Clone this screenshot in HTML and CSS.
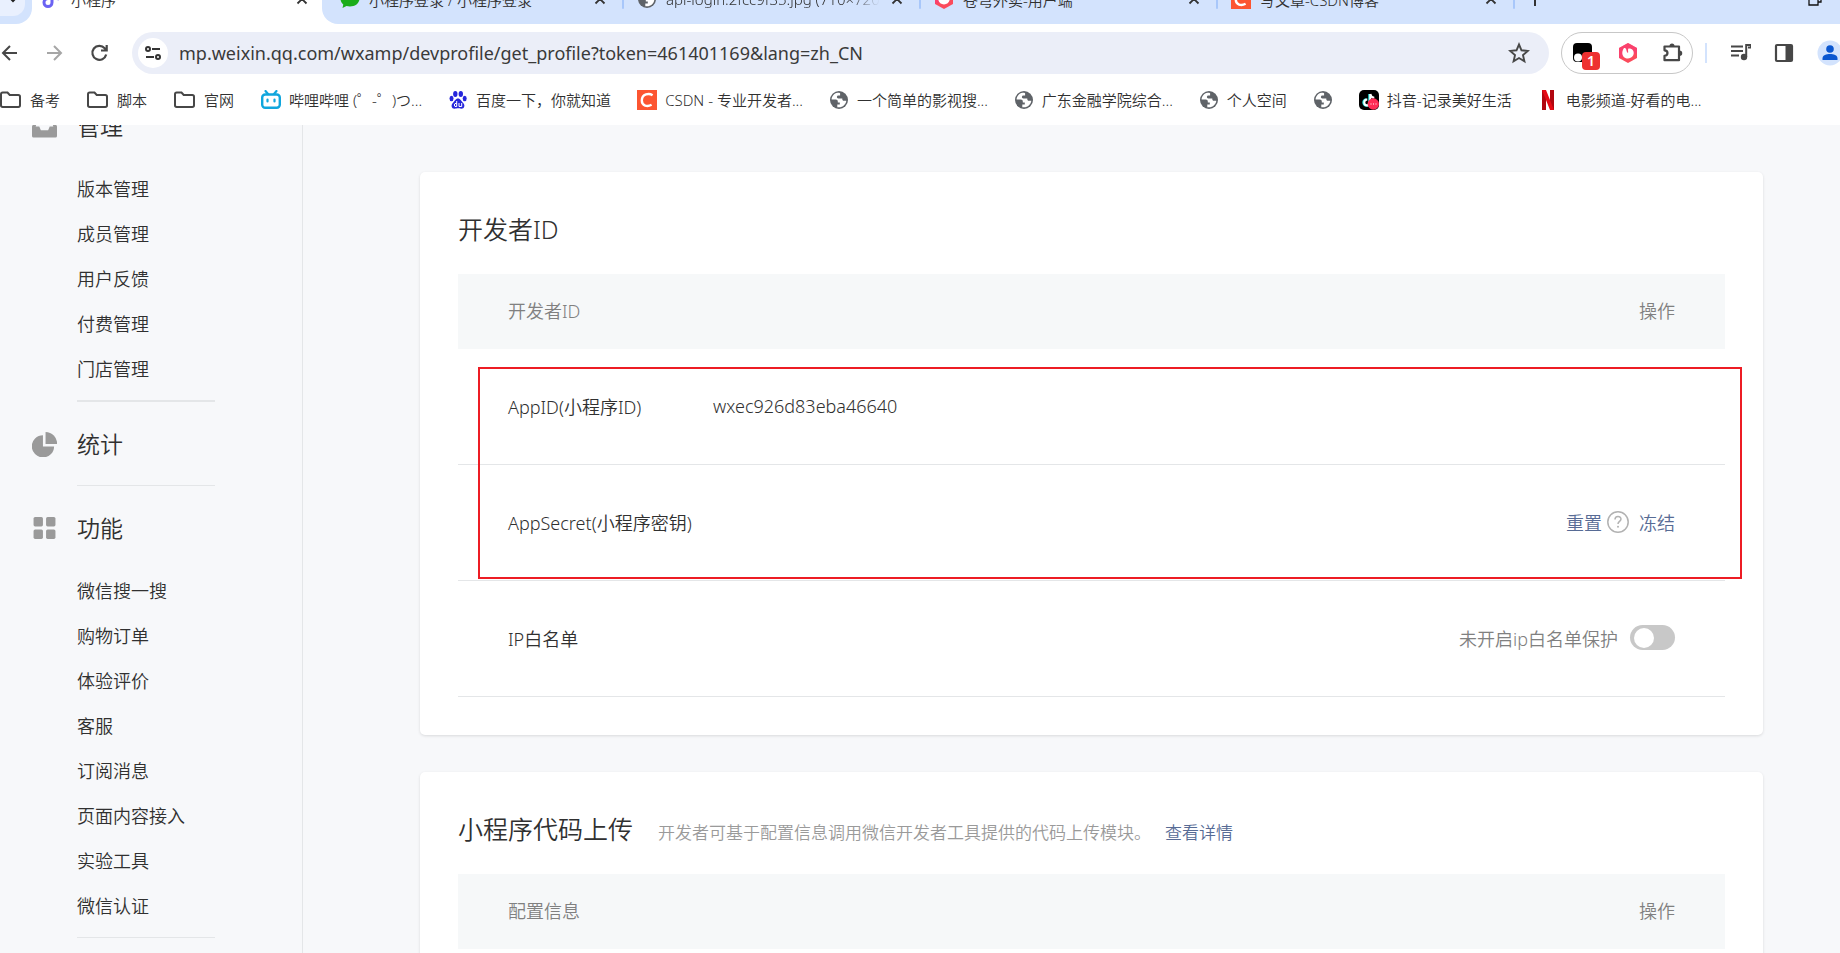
FILE: index.html
```html
<!DOCTYPE html>
<html lang="zh-CN">
<head>
<meta charset="utf-8">
<title>小程序</title>
<link rel="stylesheet" href="styles.css">
</head>
<body>
<svg class="defs" aria-hidden="true">
  <symbol id="i-close" viewBox="0 0 16 16"><path d="M3.500 3.500l9 9M12.500 3.500l-9 9" fill="none" stroke="#333" stroke-width="1.800"/></symbol>
  <symbol id="i-globe" viewBox="0 0 20 20"><circle cx="10" cy="10" r="9" fill="#5f6368"/><path d="M8.500 2.800C5 3.400 2.600 6.400 2.600 9.600h4.200c1.300 0 2 .8 2 1.900v1h2v2H8.300v2.700c5 .9 8.600-2.500 9-6.400h-2.500c-1 0-1.500-.7-1.500-1.500V8.400H9.400c-1 0-1.500-.6-1.500-1.400 0-.9.600-1.500 1.500-1.500h1.700V3.200c-.8-.4-1.700-.5-2.600-.4z" fill="#fff"/></symbol>
  <symbol id="i-folder" viewBox="0 0 22 20"><path d="M1 4.200q0-1.700 1.700-1.700h4.800l2.200 2.500h8.600q1.700 0 1.700 1.700v8.600q0 1.700-1.700 1.700H2.700Q1 17 1 15.300z" fill="none" stroke="#474747" stroke-width="2"/></symbol>
  <symbol id="i-csdn" viewBox="0 0 20 20"><path d="M0 0h20v20H0z" fill="#fc5531"/><path d="M15.600 5.200C12 3 5 3.700 4.800 10.600c0 5.400 5.500 6.400 9.800 4.200" fill="none" stroke="#fff" stroke-width="2.400"/></symbol>
  <symbol id="i-hex" viewBox="0 0 20 20"><path d="M10 0l9 5v10l-9 5-9-5V5z" fill="#fb4b5c"/><path d="M10 0l9 5v5L1 15V5z" fill="#fa3a78" opacity=".6"/><path d="M5.800 5.200c1.300-.4 2 .3 2.400 1.300.4 1 .3 2.500 1.800 3.600.6-1.300-.6-2.700.4-4.600 3.500-.4 5.600 2 5.300 5-.3 2.800-2.700 4.900-5.700 4.900s-5.500-2-5.700-5c-.1-2 .5-3.700 1.500-5.200z" fill="#fff"/></symbol>
</svg>

<header class="browser">
  <div class="strip">
    <div class="strip-left"><button class="tab-search" aria-label="搜索标签页"><svg width="14" height="14" viewBox="0 0 14 14"><path d="M2 4l5 5 5-5" fill="none" stroke="#222" stroke-width="2"/></svg></button></div>
    <div class="tab tab-active">
      <svg class="ico" viewBox="0 0 20 20"><path d="M10 3v10.500a4 4 0 1 1-4-4" fill="none" stroke="#6b63f3" stroke-width="3"/><path d="M10 3c1 4 3 6.500 7 7" fill="none" stroke="#8f86f7" stroke-width="3"/></svg>
      <span class="tab-title">小程序</span>
      <button class="close" aria-label="关闭"><svg width="16" height="16"><use href="#i-close"/></svg></button>
    </div>
    <div class="strip-rest">
      <div class="tab">
        <svg class="ico" viewBox="0 0 20 20"><path d="M10 1.500c5.500 0 9.500 3.500 9.500 8s-4 8-9.500 8c-1.300 0-2.500-.2-3.500-.5l-4 2 .8-3.500C1.500 14 .5 12 .5 9.500c0-4.500 4-8 9.500-8z" fill="#1aad19"/></svg>
        <span class="tab-title">小程序登录 / 小程序登录</span>
        <button class="close" aria-label="关闭"><svg width="16" height="16"><use href="#i-close"/></svg></button>
      </div>
      <div class="tab">
        <svg class="ico"><use href="#i-globe"/></svg>
        <span class="tab-title fade">api-login.2fcc9f35.jpg (710×720)</span>
        <button class="close" aria-label="关闭"><svg width="16" height="16"><use href="#i-close"/></svg></button>
      </div>
      <div class="tab">
        <svg class="ico"><use href="#i-hex"/></svg>
        <span class="tab-title">苍穹外卖-用户端</span>
        <button class="close" aria-label="关闭"><svg width="16" height="16"><use href="#i-close"/></svg></button>
      </div>
      <div class="tab">
        <svg class="ico"><use href="#i-csdn"/></svg>
        <span class="tab-title">写文章-CSDN博客</span>
        <button class="close" aria-label="关闭"><svg width="16" height="16"><use href="#i-close"/></svg></button>
      </div>
      <button class="new-tab" aria-label="新标签页"><svg width="16" height="16" viewBox="0 0 16 16"><path d="M8 1v14M1 8h14" stroke="#333" stroke-width="2"/></svg></button>
      <button class="restore" aria-label="还原"><svg width="14" height="14" viewBox="0 0 14 14"><path d="M1 4h9v9H1zM4 4V1h9v9h-3" fill="none" stroke="#111" stroke-width="1.300"/></svg></button>
    </div>
  </div>

  <div class="toolbar">
    <div class="nav">
      <button aria-label="后退"><svg width="20" height="20" viewBox="0 0 20 20"><path d="M17 10H3.500M10 3l-7 7 7 7" fill="none" stroke="#474747" stroke-width="2"/></svg></button>
      <button aria-label="前进"><svg width="20" height="20" viewBox="0 0 20 20"><path d="M2 10h13.500M9 3l7 7-7 7" fill="none" stroke="#a6a6a6" stroke-width="2"/></svg></button>
      <button aria-label="重新加载"><svg width="20" height="20" viewBox="0 0 20 20"><path d="M16.200 11.500a7 7 0 1 1-1.500-6.300L16.500 7M16.700 2v5.500H11" fill="none" stroke="#474747" stroke-width="2.200"/></svg></button>
    </div>
    <div class="omnibox">
      <button class="site" aria-label="网站信息"><svg width="18" height="18" viewBox="0 0 18 18"><g fill="none" stroke="#333" stroke-width="2"><circle cx="4" cy="5" r="2"/><path d="M8 5h8M2 13h8"/><circle cx="14" cy="13" r="2"/></g></svg></button>
      <input class="url" type="text" aria-label="地址栏" value="mp.weixin.qq.com/wxamp/devprofile/get_profile?token=461401169&amp;lang=zh_CN">
      <button aria-label="收藏"><svg width="22" height="22" viewBox="0 0 22 22"><path d="M11 2.500l2.500 5.800 6.300.6-4.800 4.200 1.400 6.200L11 16l-5.400 3.300L7 13.100 2.200 8.900l6.300-.6z" fill="none" stroke="#474747" stroke-width="1.900"/></svg></button>
    </div>
    <div class="exts">
      <button class="ext" aria-label="脚本扩展"><svg width="20" height="20" viewBox="0 0 20 20"><rect width="19" height="19" y="0" rx="4"/><circle cx="5" cy="14.500" r="4" fill="#fff"/><circle cx="14" cy="14.500" r="4" fill="#fff"/></svg><span class="count">1</span></button>
      <button class="ext" aria-label="扩展"><svg width="20" height="20"><use href="#i-hex"/></svg></button>
      <button class="ext" aria-label="扩展程序"><svg width="22" height="22" viewBox="0 0 22 22"><path d="M2.500 4.500H17v13.700H2.500v-4.400c4-.3 4-5.200 0-5.500z" fill="none" stroke="#474747" stroke-width="2.200" stroke-linejoin="round"/><path d="M7.500 4a2.500 2.500 0 0 1 5 0zM17.500 8.500a2.500 2.500 0 0 1 0 5.500z" fill="#474747"/></svg></button>
    </div>
    <div class="tools">
      <button aria-label="媒体"><svg width="20" height="20" viewBox="0 0 20 20"><path d="M0 3.500h12M0 8h12M0 12.500h8" stroke="#474747" stroke-width="2.200"/><circle cx="13" cy="14" r="3.200" fill="#474747"/><path d="M15.200 14V2H20v2.500h-3" fill="none" stroke="#474747" stroke-width="2"/></svg></button>
      <button aria-label="侧边栏"><svg width="20" height="20" viewBox="0 0 20 20"><rect x="2" y="2" width="16" height="16" rx="1" fill="none" stroke="#474747" stroke-width="2.200"/><path d="M11.500 2H18v16h-6.500z" fill="#474747"/></svg></button>
      <button aria-label="用户"><svg width="26" height="26" viewBox="0 0 26 26"><circle cx="13" cy="13" r="12.500" fill="#d3e3fd"/><circle cx="13" cy="9" r="3.800" fill="#0b57d0"/><path d="M5.500 20v-1.500c0-3.500 4-4.500 7.500-4.500s7.500 1 7.500 4.500V20z" fill="#0b57d0"/></svg></button>
    </div>
  </div>

  <nav class="bookmarks" aria-label="书签">
    <a class="folder" href="#"><svg class="fold"><use href="#i-folder"/></svg>备考</a>
    <a class="folder" href="#"><svg class="fold"><use href="#i-folder"/></svg>脚本</a>
    <a class="folder" href="#"><svg class="fold"><use href="#i-folder"/></svg>官网</a>
    <a href="#"><svg class="ico" viewBox="0 0 20 20"><rect x="1.200" y="4.500" width="17.600" height="13.300" rx="3" fill="none" stroke="#10a6dd" stroke-width="2.400"/><path d="M4.500 1l2.500 3M15.500 1L13 4M6.500 9.500v2M13.500 9.500v2" stroke="#10a6dd" stroke-width="2.200" stroke-linecap="round"/></svg>哔哩哔哩 (゜-゜)つ...</a>
    <a href="#"><svg class="ico" viewBox="0 0 20 20"><g fill="#2626dc"><ellipse cx="7.300" cy="4" rx="2.200" ry="3"/><ellipse cx="12.800" cy="4" rx="2.200" ry="3"/><ellipse cx="3.500" cy="8.500" rx="2" ry="2.700"/><ellipse cx="16.700" cy="8.500" rx="2" ry="2.700"/><path d="M10 8.500c2.500 0 3 2.500 5 4.200 2.500 2.300 1.500 6-1.700 6-1.500 0-2-.4-3.300-.4s-2 .4-3.500.4c-3 0-4-3.700-1.500-6 2-1.700 2.500-4.200 5-4.200z"/></g><path d="M8.700 11v5.500H7q-1.500-1.500 0-3h1.700M11 13v3.500h2.700V13" fill="none" stroke="#fff"/></svg>百度一下，你就知道</a>
    <a href="#"><svg class="ico"><use href="#i-csdn"/></svg>CSDN - 专业开发者...</a>
    <a href="#"><svg class="ico"><use href="#i-globe"/></svg>一个简单的影视搜...</a>
    <a href="#"><svg class="ico"><use href="#i-globe"/></svg>广东金融学院综合...</a>
    <a href="#"><svg class="ico"><use href="#i-globe"/></svg>个人空间</a>
    <a href="#" aria-label="网页"><svg class="ico"><use href="#i-globe"/></svg></a>
    <a href="#"><svg class="ico" viewBox="0 0 20 20"><rect width="20" height="20" rx="5"/><path d="M10.500 4v8.500a3 3 0 1 1-3-3" fill="none" stroke="#25f4ee" stroke-width="2.400"/><path d="M11.300 4v8.500a3 3 0 1 1-3-3M11.300 4c.5 2.500 2 3.600 4 3.800" fill="none" stroke="#fff" stroke-width="2"/><circle cx="14.300" cy="14" r="5.700" fill="#fe2c55"/><path d="M11.500 14h1M14 14h1M16.500 14h1" stroke="#fff" stroke-width="1.200"/></svg>抖音-记录美好生活</a>
    <a href="#"><svg class="ico" viewBox="0 0 20 20"><path d="M4 0h4v20H4zM12 0h4v20h-4z" fill="#b1060f"/><path d="M4 0h4l8 20h-4z" fill="#e50914"/></svg>电影频道-好看的电...</a>
  </nav>
</header>

<div class="page">
  <aside class="sidebar">
    <nav class="menu">
      <section class="group group-first">
        <h2><svg class="mi" viewBox="0 0 24 24"><path d="M4.500 2h15L24 12v9q0 1.500-1.500 1.500h-21Q0 22.500 0 21v-9zM6 4.500L3.500 12H7l1.500 3.500h7L17 12h3.500L18 4.500z" fill="#9a9a9a" fill-rule="evenodd"/></svg>管理</h2>
        <ul><li><a href="#">版本管理</a></li><li><a href="#">成员管理</a></li><li><a href="#">用户反馈</a></li><li><a href="#">付费管理</a></li><li><a href="#">门店管理</a></li></ul>
      </section>
      <section class="group">
        <h2><svg class="mi" viewBox="0 0 24 24"><path d="M10.500 3v10.800h10.700A10.700 10.700 0 1 1 10.500 3z" fill="#9a9a9a"/><path d="M13 0a11.500 11.500 0 0 1 11.200 11.500H13z" fill="#9a9a9a"/></svg>统计</h2>
      </section>
      <section class="group">
        <h2><svg class="mi" viewBox="0 0 24 24"><g fill="#9a9a9a"><rect x="1.500" y="1" width="9" height="9" rx="1.500"/><rect x="13.500" y="1" width="9" height="9" rx="1.500"/><rect x="1.500" y="13" width="9" height="9" rx="1.500"/><rect x="13.500" y="13" width="9" height="9" rx="1.500"/></g></svg>功能</h2>
        <ul><li><a href="#">微信搜一搜</a></li><li><a href="#">购物订单</a></li><li><a href="#">体验评价</a></li><li><a href="#">客服</a></li><li><a href="#">订阅消息</a></li><li><a href="#">页面内容接入</a></li><li><a href="#">实验工具</a></li><li><a href="#">微信认证</a></li></ul>
      </section>
    </nav>
  </aside>

  <main class="main">
    <section class="card">
      <div class="card-head"><h1>开发者ID</h1></div>
      <div class="marked">
        <table class="grid">
          <thead><tr><th class="col-name">开发者ID</th><th></th><th class="col-act">操作</th></tr></thead>
          <tbody>
            <tr><td>AppID(小程序ID)</td><td>wxec926d83eba46640</td><td></td></tr>
            <tr><td>AppSecret(小程序密钥)</td><td></td><td><div class="acts"><a href="#">重置</a><button class="help" aria-label="帮助"><svg width="22" height="22" viewBox="0 0 22 22"><circle cx="11" cy="11" r="10.200" fill="none" stroke="#b2b2b2" stroke-width="1.500"/><path d="M8 8.500c0-4 6-4 6-.4 0 2.200-3 2.400-3 4.800" fill="none" stroke="#b2b2b2" stroke-width="1.500"/><circle cx="11" cy="15.800" r="1" fill="#b2b2b2"/></svg></button><a href="#">冻结</a></div></td></tr>
            <tr><td>IP白名单</td><td></td><td><div class="acts"><label for="ipwl">未开启ip白名单保护</label><input id="ipwl" class="switch" type="checkbox"></div></td></tr>
          </tbody>
        </table>
        <div class="highlight"></div>
      </div>
    </section>

    <section class="card">
      <div class="card-head"><h1>小程序代码上传</h1><p>开发者可基于配置信息调用微信开发者工具提供的代码上传模块。<a href="#">查看详情</a></p></div>
      <table class="grid">
        <thead><tr><th class="col-name">配置信息</th><th></th><th class="col-act">操作</th></tr></thead>
        <tbody><tr><td></td><td></td><td></td></tr></tbody>
      </table>
    </section>
  </main>
</div>
</body>
</html>
```

FILE: styles.css
```css
* { box-sizing: border-box; }

body {
  margin: 0;
  height: 100vh;
  display: flex;
  flex-direction: column;
  overflow: hidden;
  font-family: "Noto Sans", "Noto Sans CJK SC", sans-serif;
  font-size: 18px;
  font-weight: 350;
  color: #303030;
  background: #fff;
}

button {
  display: flex;
  align-items: center;
  justify-content: center;
  padding: 0;
  border: 0;
  background: none;
  font: inherit;
}

a { text-decoration: none; color: inherit; }
h1, h2, p, ul { margin: 0; padding: 0; font-weight: inherit; }
svg { display: block; flex: none; }
.defs { position: absolute; width: 0; height: 0; }
.ico { width: 20px; height: 20px; }

/* Browser chrome */
.browser { flex: none; }

.strip {
  display: flex;
  align-items: flex-end;
  height: 24px;
  overflow: hidden;
  font-size: 15px;
}

.strip-left, .strip-rest, .tab { display: flex; align-items: center; height: 50px; }
.strip-left {
  flex: none;
  width: 32px;
  align-items: flex-start;
  background: #d3e3fd;
  border-bottom-right-radius: 16px;
}
.tab-search { width: 25px; height: 42px; background: #e9f0fe; border-bottom-right-radius: 12px; }
.tab-search svg { margin-top: 8px; }
.strip-rest {
  flex: 1;
  min-width: 0;
  padding-left: 5px;
  background: #d3e3fd;
  border-bottom-left-radius: 16px;
}
.tab { flex: 0 1 297px; min-width: 0; gap: 9px; padding: 0 16px 0 13px; position: relative; }
.strip-rest .tab::after {
  content: "";
  position: absolute;
  right: 0;
  top: 15px;
  width: 2px;
  height: 20px;
  border-radius: 1px;
  background: #a8c7fa;
}
.tab-active { flex-basis: 290px; padding: 0 12px 0 10px; }
.tab-title { flex: 1; min-width: 0; overflow: hidden; white-space: nowrap; }
.fade { -webkit-mask-image: linear-gradient(90deg, #000 85%, transparent); mask-image: linear-gradient(90deg, #000 85%, transparent); }
.new-tab { margin-left: 12px; }
.restore { margin: 0 18px 0 auto; }

.toolbar { display: flex; align-items: center; height: 50px; padding-top: 8px; }
.nav { display: flex; gap: 25px; flex: none; width: 132px; }
.omnibox {
  flex: 1;
  display: flex;
  align-items: center;
  height: 42px;
  padding: 0 19px 0 6px;
  border-radius: 21px;
  background: #ebeef8;
}
.site { width: 30px; height: 30px; border-radius: 50%; background: #fff; }
.url {
  flex: 1;
  min-width: 0;
  padding: 0 11px;
  border: 0;
  background: none;
  font: inherit;
  font-weight: 400;
  color: #3a3a3a;
}
.exts {
  display: flex;
  align-items: center;
  justify-content: space-between;
  width: 132px;
  height: 42px;
  margin-left: 12px;
  padding: 0 8px 0 11px;
  border: 1px solid #c7c7c7;
  border-radius: 21px;
}
.ext { position: relative; }
.count {
  position: absolute;
  left: 9px;
  top: 9px;
  width: 18px;
  height: 18px;
  border-radius: 4px;
  background: #ee3131;
  color: #fff;
  font-size: 14px;
  font-weight: 600;
  line-height: 18px;
  text-align: center;
}
.tools {
  display: flex;
  align-items: center;
  gap: 23px;
  height: 20px;
  width: 135px;
  margin-left: 12px;
  padding-left: 24px;
  border-left: 2px solid #d3e3fd;
}

.bookmarks {
  display: flex;
  align-items: center;
  gap: 26px;
  height: 51px;
  font-size: 15px;
  white-space: nowrap;
}
.bookmarks a { display: flex; align-items: center; gap: 8px; }
.bookmarks .folder { margin-right: 1px; }
.fold { width: 22px; height: 20px; }

/* Page */
.page { flex: 1; min-height: 0; display: flex; overflow: hidden; background: #f7f8fa; }

.sidebar { flex: none; width: 303px; border-right: 1px solid #e4e6e8; }
.menu { margin-top: -41px; }
.group h2 {
  display: flex;
  align-items: center;
  gap: 20px;
  padding: 22px 0 21px 32px;
  font-size: 23px;
  line-height: 40px;
}
.mi { width: 25px; height: 25px; }
.group ul { list-style: none; padding: 0 0 8px 77px; }
.group li { line-height: 45px; }
.group::after {
  content: "";
  display: block;
  width: 138px;
  height: 1px;
  margin-left: 77px;
  background: #e4e6e8;
}
.group-first::after { height: 2px; }

.main {
  flex: 1;
  display: flex;
  flex-direction: column;
  gap: 37px;
  padding: 47px 77px 0 117px;
}
.card {
  flex: none;
  padding: 37px 38px 38px;
  border-radius: 5px;
  background: #fff;
  box-shadow: 0 1px 3px rgba(0, 0, 0, 0.12);
}
.card-head { display: flex; align-items: baseline; gap: 25px; margin-bottom: 25px; line-height: 40px; }
.card-head h1 { font-size: 25px; }
.card-head p { font-size: 17px; line-height: 24px; color: #9a9a9a; }
.card-head a { margin-left: 14px; }
.main a { color: #576b95; }

.marked { position: relative; }
.highlight {
  position: absolute;
  top: 93px;
  right: -17px;
  bottom: 118px;
  left: 20px;
  border: 2px solid #ed1c24;
  pointer-events: none;
}

.grid { width: 100%; border-collapse: separate; border-spacing: 0; table-layout: fixed; }
.grid th { height: 75px; padding: 0 0 3px; background: #f6f8f9; color: #808080; font-weight: inherit; text-align: left; }
.grid td { height: 116px; padding: 0 0 2px; border-bottom: 1px solid #e4e6e8; white-space: nowrap; }
.grid .col-name { width: 255px; }
.grid tr > :first-child { padding-left: 50px; }
.grid tr > :last-child { padding-right: 50px; text-align: right; }
.acts { display: flex; align-items: center; justify-content: flex-end; }
.acts label { margin-right: 12px; color: #808080; }
.help { margin: 0 10px 0 5px; }
.switch {
  appearance: none;
  display: flex;
  align-items: center;
  width: 45px;
  height: 25px;
  margin: 0;
  padding: 0 4px;
  border-radius: 13px;
  background: #c8c8c8;
}
.switch::before { content: ""; width: 20px; height: 20px; border-radius: 50%; background: #fff; }
```
